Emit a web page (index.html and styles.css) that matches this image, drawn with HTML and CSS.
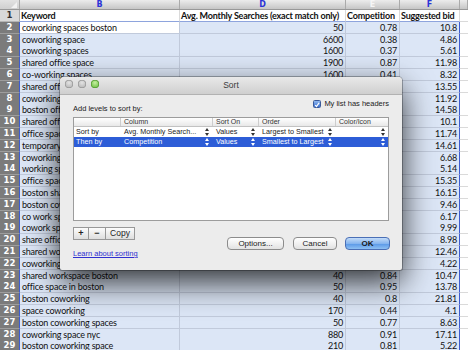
FILE: index.html
```html
<!DOCTYPE html>
<html lang="en">
<head>
    <meta charset="UTF-8">
    <meta name="viewport" content="width=device-width, initial-scale=1.0">
    <title>Sort</title>
    <link rel="stylesheet" href="styles.css">
</head>
<body>
    <div class="sheet">
        <div class="row top">
            <div class="corner"></div>
            <div class="letter sel">B</div>
            <div class="letter sel">D</div>
            <div class="letter">E</div>
            <div class="letter sel">F</div>
            <div class="letter"></div>
        </div>
        <div id="rows"></div>
    </div>

    <div class="dialog">
        <div class="titlebar">
            <div class="lights">
                <span class="light"></span>
                <span class="light"></span>
                <span class="light green"></span>
            </div>
            <div class="title">Sort</div>
            <div class="lights"></div>
        </div>
        <div class="body">
            <div class="head">
                <span class="add">Add levels to sort by:</span>
                <label class="check">
                    <span class="box">
                        <svg width="8" height="8" viewBox="0 0 8 8"><path d="M1.5 4.2 L3.3 6 L6.8 1.2" fill="none" stroke="#fff" stroke-width="1.6"/></svg>
                    </span>
                    My list has headers
                </label>
            </div>
            <div class="levels">
                <div class="lrow lhead">
                    <div></div>
                    <div>Column</div>
                    <div>Sort On</div>
                    <div>Order</div>
                    <div>Color/Icon</div>
                </div>
                <div class="lrow">
                    <div>Sort by</div>
                    <div class="pop">Avg. Monthly Search... <span class="ud"></span></div>
                    <div class="pop">Values <span class="ud"></span></div>
                    <div class="pop">Largest to Smallest <span class="ud"></span></div>
                    <div class="pop"><span></span><span class="ud"></span></div>
                </div>
                <div class="lrow picked">
                    <div>Then by</div>
                    <div class="pop">Competition <span class="ud"></span></div>
                    <div class="pop">Values <span class="ud"></span></div>
                    <div class="pop">Smallest to Largest <span class="ud"></span></div>
                    <div class="pop"><span></span><span class="ud"></span></div>
                </div>
            </div>
            <div class="foot">
                <div class="left">
                    <div class="tools">
                        <button class="tool plus">+</button>
                        <button class="tool minus">&minus;</button>
                        <button class="tool copy">Copy</button>
                    </div>
                    <a href="#" class="learn">Learn about sorting</a>
                </div>
                <div class="buttons">
                    <button class="btn options">Options...</button>
                    <button class="btn cancel">Cancel</button>
                    <button class="btn ok">OK</button>
                </div>
            </div>
        </div>
    </div>

    <script>
        let datos = [
            ["Keyword","Avg. Monthly Searches (exact match only)","Competition","Suggested bid"],
            ["coworking spaces boston",50,0.78,10.8],
            ["coworking space",6600,0.38,4.86],
            ["coworking spaces",1600,0.37,5.61],
            ["shared office space",1900,0.87,11.98],
            ["co-working spaces",1600,0.41,8.32],
            ["shared office space boston",320,0.79,13.55],
            ["coworking boston",110,0.72,11.92],
            ["boston office space",390,0.81,14.58],
            ["shared office",880,0.77,10.1],
            ["office space sharing",260,0.83,11.74],
            ["temporary office space",1000,0.86,14.61],
            ["coworking office",210,0.52,6.68],
            ["working space",720,0.34,5.14],
            ["office space rental",1300,0.9,15.35],
            ["boston shared office space",30,0.92,16.15],
            ["boston coworking space",70,0.69,9.46],
            ["co work space",90,0.4,6.17],
            ["cowork space",140,0.55,9.99],
            ["share office space",110,0.71,8.98],
            ["shared workspace",260,0.74,12.46],
            ["coworking office space",90,0.48,4.22],
            ["shared workspace boston",40,0.84,10.47],
            ["office space in boston",50,0.95,13.78],
            ["boston coworking",40,0.8,21.81],
            ["space coworking",170,0.44,4.1],
            ["boston coworking spaces",50,0.77,8.63],
            ["coworking space nyc",880,0.91,17.11],
            ["boston coworking space",210,0.81,5.22]
        ];
        let filas = document.getElementById("rows");

        datos.forEach((d,i)=>{
            let fila = document.createElement("div");
            fila.className = i==0 ? "row first" : "row";
            fila.innerHTML = `<div class="num">${i+1}</div>`
                + `<div class="cell text">${d[0]}</div>`
                + `<div class="cell">${d[1]}</div>`
                + `<div class="cell">${d[2]}</div>`
                + `<div class="cell last">${d[3]}</div>`
                + `<div class="cell blank"></div>`;
            filas.appendChild(fila);
        });
    </script>
</body>
</html>
```

FILE: styles.css
```css
*{
    box-sizing: border-box;
}
body{
    margin: 0;
    width: 468px;
    height: 350px;
    overflow: hidden;
    position: relative;
    background: #fff;
    font-family: Lato, "Liberation Sans", sans-serif;
}

/* hoja de calculo */
.row{
    display: grid;
    grid-template-columns: 20px 160px 166px 54px 60px 1fr;
    height: 11.8px;
}
.top{
    height: 10px;
    background: linear-gradient(#ececec, #c6c6c6);
    border-bottom: 1px solid #989898;
}
.corner{
    position: relative;
    border-right: 1px solid #a8a8a8;
    background: linear-gradient(#e2e2e2, #cfcfcf);
}
.corner::after{
    content: "";
    position: absolute;
    right: 2px;
    bottom: 1px;
    border-left: 6px solid transparent;
    border-bottom: 6px solid #f2f2f2;
}
.letter{
    font: bold 8px "DejaVu Sans", sans-serif;
    line-height: 9px;
    text-align: center;
    color: #f6f6f6;
    border-right: 1px solid #aaaaaa;
}
.letter.sel{
    color: #2b34d6;
}
.num{
    background: #7b7b7b;
    color: #fff;
    font: bold 8.5px "DejaVu Sans", sans-serif;
    line-height: 11px;
    text-align: center;
    border-bottom: 1px solid #9d9d9d;
    border-right: 1px solid #3e5ccf;
}
.first .num{
    background: #d9d9d9;
    color: #333;
    border-bottom-color: #b4b4b4;
    border-right-color: #a8a8a8;
}
.cell{
    background: #dce6f6;
    border-right: 1px solid #c1cadb;
    border-bottom: 1px solid #c1cadb;
    font-size: 9px;
    letter-spacing: -0.2px;
    line-height: 11px;
    padding: 0 2px;
    text-align: right;
    white-space: nowrap;
    overflow: hidden;
    color: #111;
}
.cell.text{
    text-align: left;
}
.cell.last{
    border-right: 1px solid #3e5ccf;
}
.cell.blank{
    background: #fff;
    border-right: none;
    border-bottom-color: #dadada;
}
.first .cell{
    background: #fff;
    font-weight: bold;
    text-align: left;
    padding: 0 1px;
    border-right-color: #dadada;
    border-bottom-color: #8ea4dd;
}
.first .cell.blank{
    border-bottom-color: #dadada;
}
#rows .row:nth-child(2) .text{
    background: #fff;
}

/* dialogo */
.dialog{
    position: absolute;
    left: 60px;
    top: 77px;
    width: 342px;
    height: 193px;
    background: #ececec;
    border-radius: 4px 4px 2px 2px;
    box-shadow: 0 12px 32px rgba(0,0,0,0.8), 0 0 0 1px rgba(0,0,0,0.28);
    font-family: "Liberation Sans", Arial, sans-serif;
    font-size: 7.5px;
    color: #222;
    display: flex;
    flex-direction: column;
}
.titlebar{
    height: 18px;
    display: flex;
    background: linear-gradient(#e9e9e9, #cfcfcf);
    border-radius: 4px 4px 0 0;
    border-bottom: 1px solid #b2b2b2;
}
.lights{
    width: 42px;
    display: flex;
    gap: 5px;
    padding: 3px 0 0 5px;
}
.light{
    width: 8px;
    height: 8px;
    border-radius: 50%;
    background: radial-gradient(circle at 50% 35%, #e4e4e4, #a9a9a9);
    box-shadow: inset 0 0 0 0.5px #8a8a8a;
}
.light.green{
    background: radial-gradient(circle at 50% 35%, #c6f0a0, #55b22a);
    box-shadow: inset 0 0 0 0.5px #3f8a20;
}
.title{
    flex: 1;
    text-align: center;
    font-size: 8.5px;
    line-height: 16px;
    color: #3a3a3a;
}
.body{
    flex: 1;
    padding: 0 13px;
    display: flex;
    flex-direction: column;
}
.head{
    display: flex;
    justify-content: space-between;
    align-items: flex-end;
    height: 14px;
    margin-top: 4px;
}
.add{
    line-height: 9px;
}
.check{
    display: flex;
    align-items: center;
    gap: 3px;
    margin-bottom: 5px;
    line-height: 9px;
}
.box{
    width: 8px;
    height: 8px;
    border-radius: 1.5px;
    background: linear-gradient(#8fb8f0, #3a6fd0);
    border: 0.5px solid #3a5a9a;
    display: flex;
}
.levels{
    margin-top: 4px;
    height: 104px;
    background: #fff;
    border: 1px solid #9c9c9c;
}
.lrow{
    display: grid;
    grid-template-columns: 46px 92px 46px 77px 1fr;
    height: 10px;
    line-height: 10px;
    font-size: 7.2px;
}
.lrow > div{
    padding-left: 2px;
    white-space: nowrap;
    overflow: hidden;
}
.lhead{
    height: 9px;
    line-height: 8px;
    font-size: 7px;
    color: #333;
    background: linear-gradient(#ffffff, #e8e8e8);
    border-bottom: 1px solid #c2c2c2;
}
.lhead > div{
    border-left: 1px solid #cdcdcd;
    padding-left: 3px;
}
.lhead > div:first-child{
    border-left: none;
}
.lrow .pop{
    display: flex;
    justify-content: space-between;
    align-items: center;
    padding: 0 3px 0 4px;
}
.picked{
    background: #2d5dd7;
    color: #fff;
}
.ud{
    width: 4px;
    height: 8px;
    flex-shrink: 0;
    display: flex;
    flex-direction: column;
    justify-content: space-between;
    align-items: center;
}
.ud::before{
    content: "";
    border-left: 2px solid transparent;
    border-right: 2px solid transparent;
    border-bottom: 3px solid #333;
}
.ud::after{
    content: "";
    border-left: 2px solid transparent;
    border-right: 2px solid transparent;
    border-top: 3px solid #333;
}
.picked .ud::before{
    border-bottom-color: #fff;
}
.picked .ud::after{
    border-top-color: #fff;
}
.foot{
    display: flex;
    justify-content: space-between;
    align-items: flex-end;
    margin-top: 6px;
}
.left{
    display: flex;
    flex-direction: column;
    gap: 9px;
}
.tools{
    display: flex;
}
.tool{
    height: 13px;
    padding: 0;
    margin: 0;
    border: 1px solid #989898;
    border-left: none;
    background: linear-gradient(#fcfcfc, #dedede);
    font-family: "Liberation Sans", Arial, sans-serif;
    font-size: 9px;
    line-height: 11px;
    color: #222;
}
.plus{
    width: 16px;
    border-left: 1px solid #989898;
    font-weight: bold;
}
.minus{
    width: 17px;
    font-weight: bold;
}
.copy{
    width: 29px;
    font-size: 8.5px;
}
.learn{
    color: #2f2fd0;
    line-height: 10px;
    text-decoration: underline;
}
.buttons{
    display: flex;
    gap: 8px;
    margin-bottom: 9px;
    margin-right: -1px;
}
.btn{
    height: 13px;
    padding: 0;
    border: 1px solid #8c8c8c;
    border-radius: 4px;
    background: linear-gradient(#ffffff, #f1f1f1 50%, #e2e2e2);
    font-family: "Liberation Sans", Arial, sans-serif;
    font-size: 8px;
    line-height: 11px;
    color: #1a1a1a;
}
.options{
    width: 57px;
    margin-right: 1px;
}
.cancel{
    width: 44px;
}
.ok{
    width: 45px;
    border-color: #4a6fb6;
    background: linear-gradient(#c4dcf8, #86b5ef 50%, #5c9ae8 55%, #8ec0f3);
    font-weight: bold;
}
```
